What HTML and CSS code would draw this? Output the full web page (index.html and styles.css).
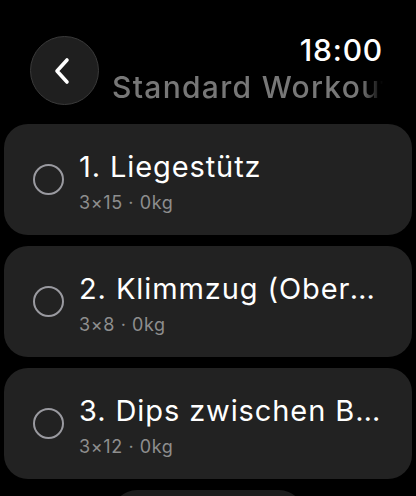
FILE: index.html
```html
<!DOCTYPE html>
<html lang="de">
<head>
    <meta charset="UTF-8">
    <meta name="viewport" content="width=device-width, initial-scale=1.0">
    <title>Standard Workout</title>
    <link rel="stylesheet" href="styles.css">
</head>
<body>
    <div class="header">
        <div class="back-btn">
            <svg width="22" height="30" viewBox="0 0 22 30">
                <path d="M15 4 L5 15 L15 26" fill="none" stroke="#fff" stroke-width="3.6" stroke-linecap="round" stroke-linejoin="round"/>
            </svg>
        </div>
        <div class="header-text">
            <div class="time">18:00</div>
            <div class="title">Standard Workout</div>
        </div>
    </div>

    <div class="list">
        <div class="card">
            <span class="check"></span>
            <div class="card-text">
                <div class="name">1. Liegestütz</div>
                <div class="meta">3×15 · 0kg</div>
            </div>
        </div>
        <div class="card">
            <span class="check"></span>
            <div class="card-text">
                <div class="name">2. Klimmzug (Obergriff)</div>
                <div class="meta">3×8 · 0kg</div>
            </div>
        </div>
        <div class="card">
            <span class="check"></span>
            <div class="card-text">
                <div class="name">3. Dips zwischen Bänken</div>
                <div class="meta">3×12 · 0kg</div>
            </div>
        </div>
        <div class="start-btn"></div>
    </div>
</body>
</html>
```

FILE: styles.css
```css
html, body {
    height: 496px;
    overflow: hidden;
}
body {
    margin: 0;
    background: #000;
    color: #fff;
    font-family: Inter, "Noto Sans", sans-serif;
}
.header {
    display: flex;
    align-items: flex-start;
    padding: 36px 33px 0 30px;
    height: 88px;
}
.back-btn {
    width: 67px;
    height: 67px;
    border-radius: 50%;
    background: #1f1f1f;
    border: 1px solid #3a3a3a;
    display: flex;
    justify-content: center;
    align-items: center;
    flex-shrink: 0;
}
.back-btn svg {
    margin-left: -4px;
}
.header-text {
    flex: 1;
    min-width: 0;
    margin-left: 13px;
    margin-top: -4px;
}
.time {
    text-align: right;
    font-size: 30px;
    font-weight: 500;
    letter-spacing: 0.8px;
    line-height: 36px;
}
.title {
    font-size: 30px;
    font-weight: 500;
    letter-spacing: 1.3px;
    color: #777;
    white-space: nowrap;
    overflow: hidden;
    line-height: 38px;
    -webkit-mask-image: linear-gradient(to right, #000 92%, transparent 100%);
}
.list {
    display: flex;
    flex-direction: column;
    align-items: center;
    gap: 11px;
    padding: 0 4px;
}
.card {
    width: 100%;
    box-sizing: border-box;
    height: 111px;
    background: #222;
    border-radius: 24px;
    display: flex;
    align-items: center;
    padding: 0 28px 0 29px;
    flex-shrink: 0;
}
.check {
    width: 27px;
    height: 27px;
    border: 2.5px solid #9a9aa0;
    border-radius: 50%;
    flex-shrink: 0;
}
.card-text {
    margin-left: 15px;
    min-width: 0;
    flex: 1;
    margin-top: 2px;
}
.name {
    font-size: 29px;
    letter-spacing: 0.9px;
    line-height: 36px;
    white-space: nowrap;
    overflow: hidden;
    text-overflow: ellipsis;
}
.meta {
    font-size: 18px;
    letter-spacing: 0.6px;
    color: #8e8e8e;
    margin-top: 7px;
}
.start-btn {
    width: 192px;
    height: 50px;
    background: #1c1c1c;
    border-radius: 25px;
    flex-shrink: 0;
}
```
